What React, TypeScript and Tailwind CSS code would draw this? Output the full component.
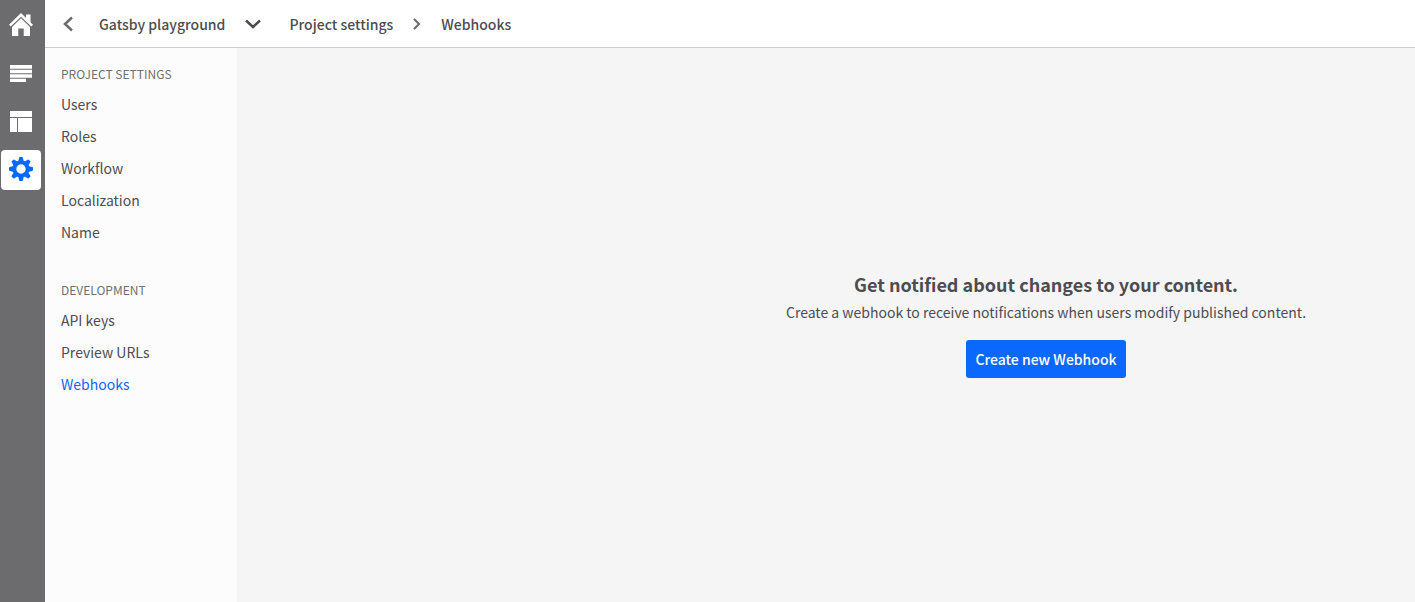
import type { ReactNode } from "react";

const HomeIcon = () => (
  <svg width="26" height="26" viewBox="0 0 26 26" fill="currentColor" aria-hidden="true">
    <path d="M18 1.500h4.500v8.500L18 5.500z" />
    <path d="M13 0 25 11.700l-1.700 1.900L13 3.700 2.700 13.600 1 11.700z" />
    <path d="M13 5.200l9 8.700V23h-6.300v-7.500h-5.400V23H4v-9.100z" />
  </svg>
);

const ContentIcon = () => (
  <svg width="22" height="18" viewBox="0 0 22 18" fill="currentColor" aria-hidden="true">
    <path d="M0 0h22v3.700H0zM0 4.700h22v3.500H0zM0 9.200h22v3.500H0zM0 13.700h16V17H0z" />
  </svg>
);

const ModelIcon = () => (
  <svg width="22" height="22" viewBox="0 0 22 22" fill="currentColor" aria-hidden="true">
    <path d="M0 0h22v6H0zM0 7h7v14H0zM8 7h14v14H8z" />
  </svg>
);

const toothAngles = [0, 45, 90, 135, 180, 225, 270, 315];

const GearIcon = () => (
  <svg width="24" height="26" viewBox="0 0 24 26" fill="currentColor" aria-hidden="true">
    <circle cx="12" cy="12" r="6.600" fill="none" stroke="currentColor" strokeWidth="3.800" />
    {toothAngles.map((angle) => (
      <path key={angle} d="M10.900 0h2.200q.7 0 .8.700l1 4.300H9.100l1-4.300q.1-.7.8-.7z" transform={`rotate(${angle} 12 12)`} />
    ))}
  </svg>
);

const RailLink = ({ label, active, children }: { label: string; active?: boolean; children: ReactNode }) => (
  <a
    href="#"
    aria-label={label}
    className={`flex h-10 w-10 items-center justify-center rounded ${active ? "bg-white text-[#0b68ff]" : "text-white"}`}
  >
    {children}
  </a>
);

const NavGroup = ({ title, items, current }: { title: string; items: string[]; current?: string }) => (
  <section>
    <h2 className="text-xs leading-6 text-[#6f6f71] uppercase">{title}</h2>
    <ul className="mt-0.5">
      {items.map((item) => (
        <li key={item}>
          <a
            href="#"
            aria-current={item === current ? "page" : undefined}
            className={`block text-sm leading-8 ${item === current ? "text-[#0b68ff]" : "text-[#4c4d52]"}`}
          >
            {item}
          </a>
        </li>
      ))}
    </ul>
  </section>
);

export default function App() {
  return (
    <div className="flex min-h-screen bg-[#f5f5f5] font-['Noto_Sans_CJK_SC','Open_Sans',sans-serif] text-sm text-[#4c4d52]">
      <nav aria-label="Main" className="flex w-[45px] shrink-0 flex-col gap-2 bg-[#6c6c6e] px-px pt-1.5">
        <RailLink label="Home"><HomeIcon /></RailLink>
        <RailLink label="Content"><ContentIcon /></RailLink>
        <RailLink label="Content models"><ModelIcon /></RailLink>
        <RailLink label="Project settings" active><GearIcon /></RailLink>
      </nav>
      <div className="flex min-w-0 flex-1 flex-col">
        <header className="flex h-12 shrink-0 items-center border-b border-[#cfcfcf] bg-white pl-4 font-medium">
          <button type="button" aria-label="Back" className="flex h-8 w-[38px] items-center">
            <svg width="14" height="16" viewBox="0 0 14 16" fill="none" stroke="#6c6c6e" strokeWidth="2.5" aria-hidden="true">
              <path d="M11 1.5 4 8l7 6.5" />
            </svg>
          </button>
          <button type="button" className="flex items-center gap-5">
            Gatsby playground
            <svg width="16" height="10" viewBox="0 0 16 10" fill="none" stroke="currentColor" strokeWidth="2.5" aria-hidden="true">
              <path d="M1 1.5 8 8l7-6.5" />
            </svg>
          </button>
          <nav aria-label="Breadcrumb" className="ml-7 flex items-center gap-5">
            <a href="#">Project settings</a>
            <svg width="8" height="12" viewBox="0 0 8 12" fill="none" stroke="#6c6c6e" strokeWidth="2" aria-hidden="true">
              <path d="M1 1l5 5-5 5" />
            </svg>
            <a href="#" aria-current="page">Webhooks</a>
          </nav>
        </header>
        <div className="flex flex-1">
          <aside className="flex w-48 shrink-0 flex-col gap-[30px] bg-[#fcfcfc] px-4 pt-3.5">
            <NavGroup title="Project settings" items={["Users", "Roles", "Workflow", "Localization", "Name"]} />
            <NavGroup title="Development" items={["API keys", "Preview URLs", "Webhooks"]} current="Webhooks" />
          </aside>
          <main className="flex flex-1 flex-col items-center justify-center pb-0.5 pl-[440px] text-center">
            <h1 className="text-lg leading-7 font-bold">Get notified about changes to your content.</h1>
            <p className="leading-7">Create a webhook to receive notifications when users modify published content.</p>
            <button type="button" className="mt-3.5 h-[38px] rounded-[3px] bg-[#0b68ff] px-[9px] font-medium text-white">
              Create new Webhook
            </button>
          </main>
        </div>
      </div>
    </div>
  );
}
